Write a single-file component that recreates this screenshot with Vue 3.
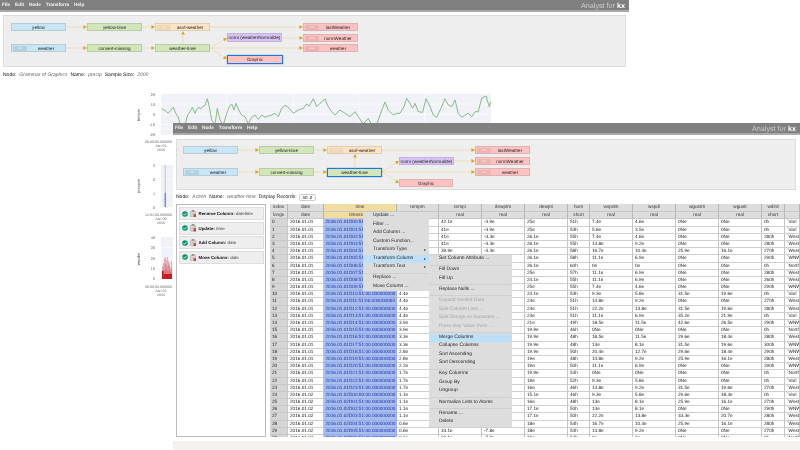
<script setup>
const seg = (x1, y1, x2, y2) => {
  const a = Math.atan2(y2 - y1, x2 - x1), c = Math.cos(a), s = Math.sin(a), L = 3.6, W = 1.9
  const bx = x2 - c * L, by = y2 - s * L
  return { x1, y1, x2: bx, y2: by, head: `${x2},${y2} ${bx - s * W},${by + c * W} ${bx + s * W},${by - c * W}` }
}
const place = (n, ox, oy) => ({ ...n, style: { left: n.x - ox + 'px', top: n.y - oy + 'px', width: n.w + 'px', height: n.h + 'px' } })
const backNodes = [
  { t: 'yellow', c: 'blue', x: 11, y: 23, w: 55, h: 8 },
  { t: 'yellow-time', c: 'green', x: 87, y: 23, w: 55, h: 8 },
  { t: 'asof-weather', c: 'orange', x: 155, y: 23, w: 55, h: 8, b: 1 },
  { t: 'weather', c: 'blue', x: 11, y: 44, w: 55, h: 8, b: 1 },
  { t: 'convert-missing', c: 'green', x: 87, y: 44, w: 55, h: 8 },
  { t: 'weather-time', c: 'green', x: 155, y: 44, w: 55, h: 8 },
  { t: 'norm (weatherNormalize)', c: 'purple', x: 227, y: 33, w: 55, h: 9 },
  { t: 'Graphic', c: 'pink', x: 227, y: 55, w: 56, h: 9, sel: 1 },
  { t: 'lastWeather', c: 'pink', x: 303, y: 23, w: 55, h: 8, b: 1 },
  { t: 'normWeather', c: 'pink', x: 303, y: 34, w: 55, h: 8, b: 1 },
  { t: 'weather', c: 'pink', x: 303, y: 44, w: 55, h: 8, b: 1 }
].map(n => place(n, 3, 15))
const frontNodes = [
  { t: 'yellow', c: 'blue', x: 183, y: 146, w: 55, h: 8 },
  { t: 'yellow-time', c: 'green', x: 259, y: 146, w: 55, h: 8 },
  { t: 'asof-weather', c: 'orange', x: 327, y: 146, w: 55, h: 8, b: 1 },
  { t: 'weather', c: 'blue', x: 183, y: 168, w: 55, h: 8, b: 1 },
  { t: 'convert-missing', c: 'green', x: 259, y: 168, w: 55, h: 8 },
  { t: 'weather-time', c: 'green', x: 327, y: 168, w: 55, h: 9, sel: 1 },
  { t: 'norm (weatherNormalize)', c: 'purple', x: 399, y: 157, w: 55, h: 8 },
  { t: 'Graphic', c: 'pink', x: 399, y: 179, w: 54, h: 8 },
  { t: 'lastWeather', c: 'pink', x: 475, y: 146, w: 55, h: 8, b: 1 },
  { t: 'normWeather', c: 'pink', x: 475, y: 157, w: 55, h: 8, b: 1 },
  { t: 'weather', c: 'pink', x: 475, y: 168, w: 55, h: 8, b: 1 }
].map(n => place(n, 176, 139))
const backEdges = [
  [66, 27, 87, 27], [142, 27, 155, 27], [210, 27, 303, 27], [66, 48, 87, 48], [142, 48, 155, 48],
  [183, 44, 183, 31], [210, 48, 227, 38], [210, 48, 227, 59], [210, 48, 303, 48], [282, 38, 303, 38]
].map(e => seg(...e))
const frontEdges = [
  [238, 150, 259, 150], [314, 150, 327, 150], [382, 150, 475, 150], [238, 172, 259, 172], [314, 172, 327, 172],
  [355, 168, 355, 154], [382, 172, 399, 161], [382, 172, 399, 183], [382, 172, 475, 172], [454, 161, 475, 161]
].map(e => seg(...e))

const raw = [485,326,497,333,505,340,512,331,520,322,527,340,534,350,541,372,548,390,556,372,563,345,570,335,577,322,585,340,590,328,597,322,603,326,610,318,615,316,622,296,628,320,635,360,645,375,652,325,660,360,670,375,680,340,688,320,695,312,702,330,708,310,716,330,725,345,735,350,745,372,755,352,765,345,775,358,785,345,795,352,805,348,815,345,825,340,835,350,845,325,855,316,865,322,880,340,895,330,910,325,920,312,928,318,940,296,950,320,960,310,975,297,985,320,995,335,1005,345,1020,330,1035,340,1050,350,1065,335,1075,350,1090,372,1105,355,1115,375,1125,390,1140,345,1155,306,1165,330,1180,345,1190,340,1200,340,1212,320,1220,295,1230,310,1238,325,1245,310,1255,335,1268,337,1278,296,1290,320,1300,345,1310,352,1325,320,1335,296,1345,315,1355,320,1365,300,1375,340,1385,352,1395,345,1405,340,1415,350,1425,335,1435,335,1445,295,1458,288,1468,320,1472,305]
const linePts = raw.map(v => (v / 3).toFixed(1)).reduce((acc, v, i) => acc + (i % 2 ? ',' : ' ') + v, '').trim()
const redBars = [7,13,9,16,11,21,8,15,22,10,19,12,22,9,14,18,8,13,16,10,7,12,18,9].map((h, i) => ({ x: 162 + i * 0.42, h }))

const menu = ['Update ...', 'Filter ...', 'Add Column ...', 'Custom Function...', '>Transform Type', '*Transform Column', '>Transform Text', '-', 'Replace ...', 'Move Column ...']
const sub = ['Set Column Attribute ...', '-', 'Fill Down', 'Fill Up', '-', 'Replace Nulls ...', '-', '~Expand Nested Data', '~Split Column Lists ...', '~Split Strings on Separator ...', '~Parse Key Value Pairs ...', '-', '!Merge Columns', 'Collapse Columns', 'Sort Ascending', 'Sort Descending', '-', 'Key Columns', 'Group By', 'Ungroup', '-', 'Normalize Lists to Atoms', '-', 'Rename ...', 'Delete']
const parse = l => ({
  sep: l === '-', arrow: l[0] === '>' || l[0] === '*', hot: l[0] === '*' || l[0] === '!', off: l[0] === '~',
  text: l.replace(/^[>*!~]/, '')
})
const menuItems = menu.map(parse), subItems = sub.map(parse)

const actions = [['Rename Column:', 'datetime'], ['Update:', 'time'], ['Add Column:', 'date'], ['Move Column:', 'date']]
const head1 = ['index', 'date', 'time', 'tempm', 'tempi', 'dewptm', 'dewpti', 'hum', 'wspdm', 'wspdi', 'wgustm', 'wgusti', 'wdird', '']
const head2 = ['longs', 'date', 'timestamp', 'real', 'real', 'real', 'real', 'short', 'real', 'real', 'real', 'real', 'short', '']

const w = s => s.split(' ')
const tempm = w('5.6 5 5 5 4.4 4.4 4.4 4.4 4.4 4.4 4.4 4.4 4.4 4.4 3.9 3.9 3.3 3.3 2.8 2.8 2.2 1.7 1.7 1.7 1.1 1.1 1.1 1.1 0.6 0.6 0.6')
const tempi = w('42.1 41 41 41 39.9 39.9 39.9 39.9 39.9 39.9 39.9 39.9 39.9 39.9 39 39 37.9 37.9 37 37 36 35.1 35.1 35.1 34 34 34 34 33.1 33.1 33.1')
const dewm = w('-3.9 -3.9 -3.3 -3.3 -3.3 -3.3 -3.3 -3.9 -4.4 -3.9 -4.4 -5 -5 -5 -6.1 -6.7 -6.7 -6.7 -6.7 -7.2 -7.2 -6.7 -7.2 -8.9 -9.4 -8.9 -8.3 -8.3 -7.8 -7.8 -7.8')
const dewi = w('25 25 26.1 26.1 26.1 26.1 26.1 25 24.1 25 24.1 23 23 23 21 19.9 19.9 19.9 19.9 19 19 19.9 19 16 15.1 16 17.1 17.1 18 18 18')
const hum = w('51 53 55 55 58 58 60 57 55 55 53 51 51 51 49 46 48 48 50 48 50 54 52 46 46 48 50 50 54 54 54')
const spdm = w('7.4 5.6 7.4 14.8 16.7 11.1 0 11.1 11.1 7.4 9.3 14.8 22.2 11.1 18.5 0N 18.5 13 20.4 14.8 11.1 0N 9.3 14.8 9.3 13 13 22.2 16.7 14.8 0')
const spdi = w('4.6 3.5 4.6 9.2 10.4 6.9 0 6.9 6.9 4.6 5.8 9.2 13.8 6.9 11.5 0N 11.5 8.1 12.7 9.2 6.9 0N 5.8 9.2 5.8 8.1 8.1 13.8 10.4 9.2 0')
const gm = w('0N 0N 0N 0N 25.9 0N 0N 0N 0N 0N 31.5 0N 31.5 35.2 42.6 0N 29.6 31.5 29.6 25.9 0N 0N 0N 31.5 29.6 25.9 0N 33.3 25.9 0N 0N')
const gi = w('0N 0N 0N 0N 16.1 0N 0N 0N 0N 0N 19.6 0N 19.6 21.9 26.5 0N 18.4 19.6 18.4 16.1 0N 0N 0N 19.6 18.4 16.1 0N 20.7 16.1 0N 0N')
const dir = w('0 0 280 280 270 290 0 280 260 290 0 270 280 0 290 0 280 300 290 280 290 0 0 270 0 270 290 280 280 270 0')
const dire = w('Vari Vari West West West WNW North West West WNW Vari West West Vari WNW North West WNW WNW West WNW North Vari West Vari West WNW West West West North')
const p2 = n => String(n).padStart(2, '0')
const rows = tempm.map((_, i) => {
  const day = i < 24 ? '01' : '02', h = i < 24 ? i : i - 24, min = i === 24 ? '00' : '51'
  const f = v => v + 'e'
  return [String(i), `2016.01.${day}`, `2016.01.${day}D${p2(h)}:${min}:00.000000000`, f(tempm[i]), f(tempi[i]), f(dewm[i]), f(dewi[i]), hum[i] + 'h', f(spdm[i]), f(spdi[i]), f(gm[i]), f(gi[i]), dir[i] + 'h', '`' + dire[i]]
})
</script>

<template>
  <div class="desk">
    <section class="back">
      <header class="bar"><nav class="menus"><span>File</span><span>Edit</span><span>Node</span><span>Transform</span><span>Help</span></nav><div class="brand">Analyst for <b>kx</b></div></header>
      <div class="canvas back-canvas">
        <svg class="edges" width="623" height="52" viewBox="3 15 623 52">
          <g v-for="(e, i) in backEdges" :key="i">
            <line :x1="e.x1" :y1="e.y1" :x2="e.x2" :y2="e.y2" class="edge" />
            <polygon :points="e.head" class="head" />
          </g>
        </svg>
        <div v-for="(n, i) in backNodes" :key="i" class="node" :class="[n.c, { sel: n.sel }]" :style="n.style">
          <i v-if="n.b" class="port">xxx</i><span>{{ n.t }}</span>
        </div>
      </div>
      <p class="meta back-meta"><span>Node:</span><em>Grammar of Graphics</em><span>Name:</span><em>precip</em><span>Sample Size:</span><em>2000</em></p>
    </section>

    <svg class="charts" width="800" height="450" viewBox="0 0 800 450">
      <rect x="161" y="94" width="330" height="41" class="plot" />
      <path d="M161 104H491M161 114H491M161 124.500H491M227 94V135M293 94V135M359 94V135M425 94V135" class="grid" />
      <polyline :points="linePts" class="trace" />
      <g class="ticks">
        <text x="155" y="95.500">20</text><text x="155" y="105.500">10</text><text x="155" y="115.500">0</text><text x="155" y="126">-10</text><text x="155" y="136">-20</text>
        <text x="155" y="166.500">3</text><text x="155" y="180.500">2</text><text x="155" y="194.500">1</text><text x="155" y="208.500">0</text>
        <text x="155" y="238.500">40</text><text x="155" y="249">30</text><text x="155" y="259.500">20</text><text x="155" y="270">10</text><text x="155" y="280">0</text>
      </g>
      <g class="xlab">
        <text x="158.500" y="143">00:00:00.000000</text><text x="161" y="147">Jan 01</text><text x="161" y="151">2016</text>
        <text x="158.500" y="215.500">12:01:00.000000</text><text x="161" y="219.500">Jan 09</text><text x="161" y="223.500">2016</text>
        <text x="158.500" y="287.500">00:00:00.000000</text><text x="161" y="291.500">Jan 01</text><text x="161" y="295.500">2016</text>
      </g>
      <g class="ylab">
        <text transform="translate(140 115) rotate(-90)">tempm</text>
        <text transform="translate(140 186) rotate(-90)">precipm</text>
        <text transform="translate(140 259) rotate(-90)">wspdm</text>
      </g>
      <rect x="161" y="165" width="12" height="42" class="plot" />
      <path d="M161 179H173M161 193H173" class="grid" />
      <rect x="164.500" y="165" width="1.500" height="28" fill="#c6d4e8" />
      <rect x="164.500" y="193" width="1.500" height="14" fill="#6f92c0" />
      <rect x="161" y="237" width="12" height="42" class="plot" />
      <path d="M161 247.500H173M161 258H173M161 268.500H173" class="grid" />
      <rect v-for="(b, i) in redBars" :key="i" :x="b.x" :y="279 - b.h" width="0.420" :height="b.h" fill="#cf4a52" />
      <rect x="162" y="271" width="1.500" height="8" fill="#b8141f" />
      <rect x="163.500" y="274" width="8.500" height="5" fill="#c01f2a" />
    </svg>

    <section class="front">
      <header class="bar"><nav class="menus"><span>File</span><span>Edit</span><span>Node</span><span>Transform</span><span>Help</span></nav><div class="brand">Analyst for <b>kx</b></div></header>
      <div class="canvas front-canvas">
        <svg class="edges" width="620" height="51" viewBox="176 139 620 51">
          <g v-for="(e, i) in frontEdges" :key="i">
            <line :x1="e.x1" :y1="e.y1" :x2="e.x2" :y2="e.y2" class="edge" />
            <polygon :points="e.head" class="head" />
          </g>
        </svg>
        <div v-for="(n, i) in frontNodes" :key="i" class="node" :class="[n.c, { sel: n.sel }]" :style="n.style">
          <i v-if="n.b" class="port">xxx</i><span>{{ n.t }}</span>
        </div>
      </div>
      <div class="meta front-meta"><span>Node:</span><em>Action</em><span>Name:</span><em>weather-time</em><span>Display Records:</span><div class="select">50<small>⇵</small></div></div>
      <div class="work">
        <aside class="actions">
          <div v-for="a in actions" :key="a[0]" class="action">
            <svg width="6" height="6" viewBox="0 0 14 14"><circle cx="7" cy="7" r="6.500" fill="#0c8f6c" /><path d="M3.500 7.200l2.500 2.600 4.500-5" fill="none" stroke="#fff" stroke-width="2" /></svg>
            <svg width="6.500" height="7.500" viewBox="0 0 14 16"><rect x="1.500" y="2.500" width="10" height="12.500" rx="1" fill="#e4e4e4" stroke="#777" /><rect x="4.500" y="0.500" width="4" height="3" fill="#bbb" stroke="#777" /><path d="M4 7h6M4 10h3" stroke="#999" /><rect x="7.500" y="9" width="6.500" height="7" fill="#e33a22" /></svg>
            <b>{{ a[0] }}</b><span>{{ a[1] }}</span>
          </div>
        </aside>
        <div class="table">
          <div class="row hdr"><div v-for="(h, i) in head1" :key="i" :class="{ timeh: i === 2 }">{{ h }}</div></div>
          <div class="row hdr"><div v-for="(h, i) in head2" :key="i" :class="{ timeh: i === 2 }">{{ h }}</div></div>
          <div v-for="r in rows" :key="r[0]" class="row body">
            <div v-for="(c, i) in r" :key="i" :class="{ idx: i === 0, tm: i === 2 }">{{ c }}</div>
          </div>
        </div>
      </div>
      <div class="band"></div>

      <ul class="ctx main-ctx">
        <template v-for="m in menuItems" :key="m.text">
          <li v-if="m.sep" class="sep"></li>
          <li v-else :class="{ hot: m.hot }">{{ m.text }}<span v-if="m.arrow" class="arrow">▸</span></li>
        </template>
      </ul>
      <ul class="ctx sub-ctx">
        <template v-for="(m, i) in subItems" :key="i">
          <li v-if="m.sep" class="sep"></li>
          <li v-else :class="{ hot: m.hot, off: m.off }">{{ m.text }}</li>
        </template>
      </ul>
    </section>
  </div>
</template>

<style scoped>
.desk { position: relative; width: 800px; height: 450px; overflow: hidden; background: #fff; font-family: "Liberation Sans", Arial, sans-serif; color: #111; filter: blur(0.28px); text-rendering: geometricPrecision; }
.back { width: 629px; }
.bar { display: flex; align-items: center; justify-content: space-between; height: 12px; box-sizing: border-box; background: #808080; color: #fff; font-size: 4.800px; padding: 0 4px 0 2px; border-bottom: 2px solid #aaa; }
.menus { display: flex; gap: 4.800px; font-weight: 700; color: #f4f4f4; }
.brand { font-size: 7.200px; color: #ccc; }
.brand b { color: #fff; }
.canvas { position: relative; background: #eee; border: 1px solid #ddd; box-sizing: border-box; }
.back-canvas { width: 623px; height: 52px; margin: 3px 3px 0; }
.edges { position: absolute; left: -1px; top: -1px; }
.edge { stroke: #f0dcb8; stroke-width: 1; }
.head { fill: #e2a324; }
.node { position: absolute; margin: -1px 0 0 -1px; box-sizing: border-box; display: flex; align-items: center; font-size: 4.600px; color: #222; white-space: nowrap; border: 1px solid; overflow: hidden; }
.node span { flex: 1; text-align: center; }
.port { width: 14px; height: 5px; margin-left: 1px; font-style: normal; font-size: 3px; line-height: 5px; text-align: center; color: #fff; opacity: 0.75; flex: none; border-radius: 1px; }
.blue { background: #c9e6f7; border-color: #b6cdd9; }
.blue .port { background: #afc9d8; }
.green { background: #d1e6ba; border-color: #b9cca6; }
.orange { background: #fde4c4; border-color: #e3cdb0; }
.orange .port { background: #e9d2b2; }
.purple { background: #d8c4f4; border-color: #c4b2de; }
.pink { background: #ffc2c2; border-color: #e0b2b2; }
.pink .port { background: #e8b0b0; }
.node.sel { border-color: #1f78e0; box-shadow: 0 0 1px #1f78e0; }
.meta { display: flex; align-items: center; margin: 0; font-size: 5px; white-space: nowrap; color: #111; }
.meta em { color: #666; margin: 0 3px 0 3px; }
.back-meta { margin: 3px 0 0 3px; height: 9px; }
.front-meta { margin: 3px 0 3px 3px; height: 8px; }
.select { display: flex; align-items: center; justify-content: space-between; box-sizing: border-box; width: 17px; height: 7px; margin-left: 2px; padding: 0 2px 0 3px; font-size: 4.500px; border: 1px solid #ccc; border-radius: 2px; background: #fff; }
.select small { font-size: 4px; }
.charts { position: absolute; left: 0; top: 0; }
.plot { fill: #f1f1f8; }
.grid { stroke: #fff; stroke-width: 0.700; fill: none; }
.trace { fill: none; stroke: #6eaa6e; stroke-width: 0.800; }
.ticks text { font-size: 3.800px; fill: #666; text-anchor: end; }
.xlab text { font-size: 3.600px; fill: #666; text-anchor: middle; }
.ylab text { font-size: 4px; fill: #444; text-anchor: middle; }
.front { position: absolute; left: 173px; top: 123px; width: 627px; height: 327px; display: flex; flex-direction: column; background: #fff; }
.front-canvas { width: 620px; height: 51px; margin: 4px 0 0 3px; flex: none; }
.work { display: flex; gap: 4px; height: 233px; padding-left: 3px; flex: none; }
.actions { width: 90px; box-sizing: border-box; padding: 2px 1px 0 2px; border: 1px solid #bbb; background: #fff; display: flex; flex-direction: column; gap: 1.600px; }
.action { display: flex; align-items: center; gap: 1.500px; height: 13px; box-sizing: border-box; padding-left: 2px; background: #eee; border: 1px solid #ddd; font-size: 4.400px; white-space: nowrap; color: #111; flex: none; }
.action b { margin-left: 1px; }
.action span { color: #333; }
.table { flex: 1; height: 233px; overflow: hidden; font-size: 4.700px; color: #222; }
.row { display: grid; grid-template-columns: 18px 36px 73px 42px 43px 43px 43px 22px 43px 43px 43px 43px 23px 15px; height: 7.200px; }
.row > div { box-sizing: border-box; overflow: hidden; white-space: nowrap; line-height: 6.200px; }
.hdr { height: 7.700px; }
.hdr > div { background: #ddd; text-align: center; border-right: 1px solid #b5b5b5; border-bottom: 1px solid #c8c8c8; line-height: 6.700px; color: #333; }
.hdr > div.timeh { background: #f1dda2; }
.body > div { background: #fff; padding-left: 2px; border-right: 1px solid #c4c4c4; border-bottom: 1px solid #d0d0d0; }
.body > div.idx { background: #d6d6d6; border-color: #c8c8c8; }
.body > div.tm { background: #a9bff0; color: #1b2cae; padding-left: 1.500px; border-color: #96aee8; }
.band { flex: none; margin-top: 4px; height: 9px; background: #f3f2ee; }
.ctx { position: absolute; margin: 0; padding: 0; list-style: none; background: #ddd; font-size: 4.900px; color: #222; }
.ctx li { position: relative; height: 8.500px; line-height: 8.500px; padding-left: 10px; white-space: nowrap; }
.ctx li.sep { height: 2.700px; padding: 0; position: relative; }
.ctx li.sep::after { content: ""; position: absolute; left: 1px; right: 1px; top: 1px; height: 1px; background: #cfcfcf; }
.ctx li.hot { background: #bde0f8; }
.ctx li.off { color: #a5a5a5; }
.arrow { position: absolute; right: 3px; font-size: 4px; color: #444; }
.main-ctx { left: 190px; top: 89px; width: 66px; height: 79px; }
.sub-ctx { left: 256px; top: 132px; width: 83px; height: 172px; }
</style>

<style>
html, body { margin: 0; overflow: hidden; background: #fff; }
</style>
